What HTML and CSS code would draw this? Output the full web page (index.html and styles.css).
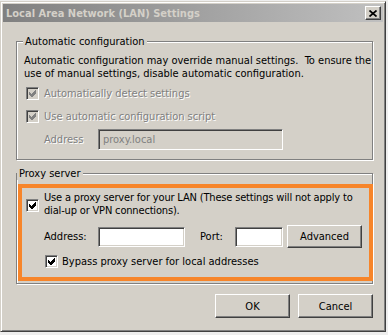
FILE: index.html
```html
<!DOCTYPE html>
<html>
<head>
<meta charset="utf-8">
<title>Local Area Network (LAN) Settings</title>
<link rel="stylesheet" href="styles.css">
</head>
<body>
<div class="window">
  <div class="titlebar">
    <span class="title">Local Area Network (LAN) Settings</span>
    <button class="close" type="button"><svg width="8" height="7" viewBox="0 0 8 7"><path d="M0.5 0.5L7.5 6.5M7.5 0.5L0.5 6.5" stroke="#000" stroke-width="1.7"/></svg></button>
  </div>
  <div class="content">
    <fieldset class="group auto">
      <legend>Automatic configuration</legend>
      <p class="desc">Automatic configuration may override manual settings.&nbsp; To ensure the<br>use of manual settings, disable automatic configuration.</p>
      <div class="check disabled row-detect">
        <span class="box"><svg width="7" height="7" viewBox="0 0 7 7" shape-rendering="crispEdges"><path d="M0 2L2 4L6 0L7 0L7 3L3 7L2 7L0 5Z"/></svg></span>
        <span class="text">Automatically detect settings</span>
      </div>
      <div class="check disabled row-script">
        <span class="box"><svg width="7" height="7" viewBox="0 0 7 7" shape-rendering="crispEdges"><path d="M0 2L2 4L6 0L7 0L7 3L3 7L2 7L0 5Z"/></svg></span>
        <span class="text">Use automatic configuration script</span>
      </div>
      <div class="script-row">
        <span class="lbl disabled-text">Address</span>
        <span class="input disabled-input">proxy.local</span>
      </div>
    </fieldset>
    <fieldset class="group proxy">
      <legend>Proxy server</legend>
      <div class="highlight">
        <div class="check row-proxy">
          <span class="box"><svg width="7" height="7" viewBox="0 0 7 7" shape-rendering="crispEdges"><path d="M0 2L2 4L6 0L7 0L7 3L3 7L2 7L0 5Z"/></svg></span>
          <span class="text">Use a proxy server for your LAN (These settings will not apply to<br>dial-up or VPN connections).</span>
        </div>
        <div class="addr-row">
          <span class="lbl addr-lbl">Address:</span>
          <span class="input addr-in"></span>
          <span class="lbl port-lbl">Port:</span>
          <span class="input port-in"></span>
          <button class="btn adv" type="button">Advanced</button>
        </div>
        <div class="check row-bypass">
          <span class="box"><svg width="7" height="7" viewBox="0 0 7 7" shape-rendering="crispEdges"><path d="M0 2L2 4L6 0L7 0L7 3L3 7L2 7L0 5Z"/></svg></span>
          <span class="text">Bypass proxy server for local addresses</span>
        </div>
      </div>
    </fieldset>
    <div class="actions">
      <button class="btn" type="button">OK</button>
      <button class="btn" type="button">Cancel</button>
    </div>
  </div>
</div>
</body>
</html>
```
FILE: styles.css
```css
* { box-sizing: border-box; }

body {
  margin: 0;
  padding-top: 1px;
  background: #eeeeee;
  font-family: "DejaVu Sans Condensed", "DejaVu Sans", sans-serif;
  font-stretch: condensed;
  font-size: 11px;
  line-height: 13px;
  color: #000;
}

.window {
  width: 386px;
  height: 331px;
  background: #d4d0c8;
  border: 1px solid;
  border-color: #d4d0c8 #404040 #404040 #d4d0c8;
  box-shadow: inset 1px 1px #fff, inset -1px -1px #808080;
  padding: 2px;
}

.titlebar {
  height: 18px;
  display: flex;
  align-items: center;
  justify-content: space-between;
  background: linear-gradient(to right, #808080, #c0c0c0);
  padding: 0 2px 0 3px;
}

.title {
  font-weight: bold;
  color: #d4d0c8;
}

.close {
  width: 16px;
  height: 14px;
  padding: 0;
  margin: 0;
  background: #d4d0c8;
  border: 1px solid;
  border-color: #fff #404040 #404040 #fff;
  box-shadow: inset -1px -1px #808080;
  display: flex;
  align-items: center;
  justify-content: center;
}

.content {
  padding: 13px 10px 0 13px;
}

.group {
  margin: 0;
  min-inline-size: 0;
  border: 1px solid #808080;
  box-shadow: inset 1px 1px #fff, 1px 1px #fff;
}

.group legend {
  padding: 0 2px;
  margin-left: -1px;
  background: #d4d0c8;
  line-height: 13px;
}

.auto {
  padding: 6px 7px 9px 7px;
}

.desc {
  margin: 0;
  white-space: nowrap;
}

.check {
  display: flex;
  align-items: center;
  height: 13px;
  gap: 5px;
}

.box {
  flex: none;
  width: 13px;
  height: 13px;
  background: #fff;
  border: 1px solid;
  border-color: #808080 #fff #fff #808080;
  box-shadow: inset 1px 1px #404040, inset -1px -1px #d4d0c8;
  display: flex;
  align-items: center;
  justify-content: center;
}

.box svg { fill: #000; display: block; }

.disabled .box { background: #d4d0c8; }
.disabled .box svg { fill: #808080; }
.disabled .text, .disabled-text {
  color: #808080;
  text-shadow: 1px 1px 0 #fff;
}

.row-detect { margin: 7px 0 0 2px; }
.row-script { margin: 10px 0 0 2px; }

.script-row {
  display: flex;
  align-items: center;
  margin-top: 6px;
  padding-left: 20px;
}

.script-row .lbl { width: 54px; }

.input {
  display: block;
  height: 21px;
  background: #fff;
  border: 1px solid;
  border-color: #808080 #fff #fff #808080;
  box-shadow: inset 1px 1px #404040, inset -1px -1px #d4d0c8;
  padding: 3px 3px 0 4px;
}

.disabled-input {
  width: 185px;
  background: #d4d0c8;
  color: #808080;
}

.proxy {
  margin-top: 7px;
  padding: 4px 0 2px 1px;
}

.highlight {
  margin-right: -1px;
  border: 4px solid #f7852a;
  padding: 3px 0 9px 4px;
}

.row-proxy {
  height: auto;
  align-items: flex-start;
}

.row-proxy .text { letter-spacing: -0.17px; }

.row-proxy .box { margin-top: 8px; }

.addr-row {
  display: flex;
  align-items: center;
  height: 23px;
  margin-top: 8px;
  padding-left: 18px;
}

.addr-lbl { width: 54px; }
.addr-in { width: 87px; height: 20px; }
.port-lbl { margin-left: 15px; width: 35px; }
.port-in { width: 48px; height: 20px; }

.btn {
  width: 75px;
  height: 23px;
  margin: 0;
  padding: 0;
  background: #d4d0c8;
  font: inherit;
  color: #000;
  border: 1px solid;
  border-color: #fff #404040 #404040 #fff;
  box-shadow: inset -1px -1px #808080;
}

.adv { margin-left: 4px; }

.row-bypass { margin: 7px 0 0 19px; gap: 4px; }

.actions {
  display: flex;
  justify-content: flex-end;
  gap: 8px;
  margin-top: 10px;
}

.actions .btn { height: 24px; }
```
